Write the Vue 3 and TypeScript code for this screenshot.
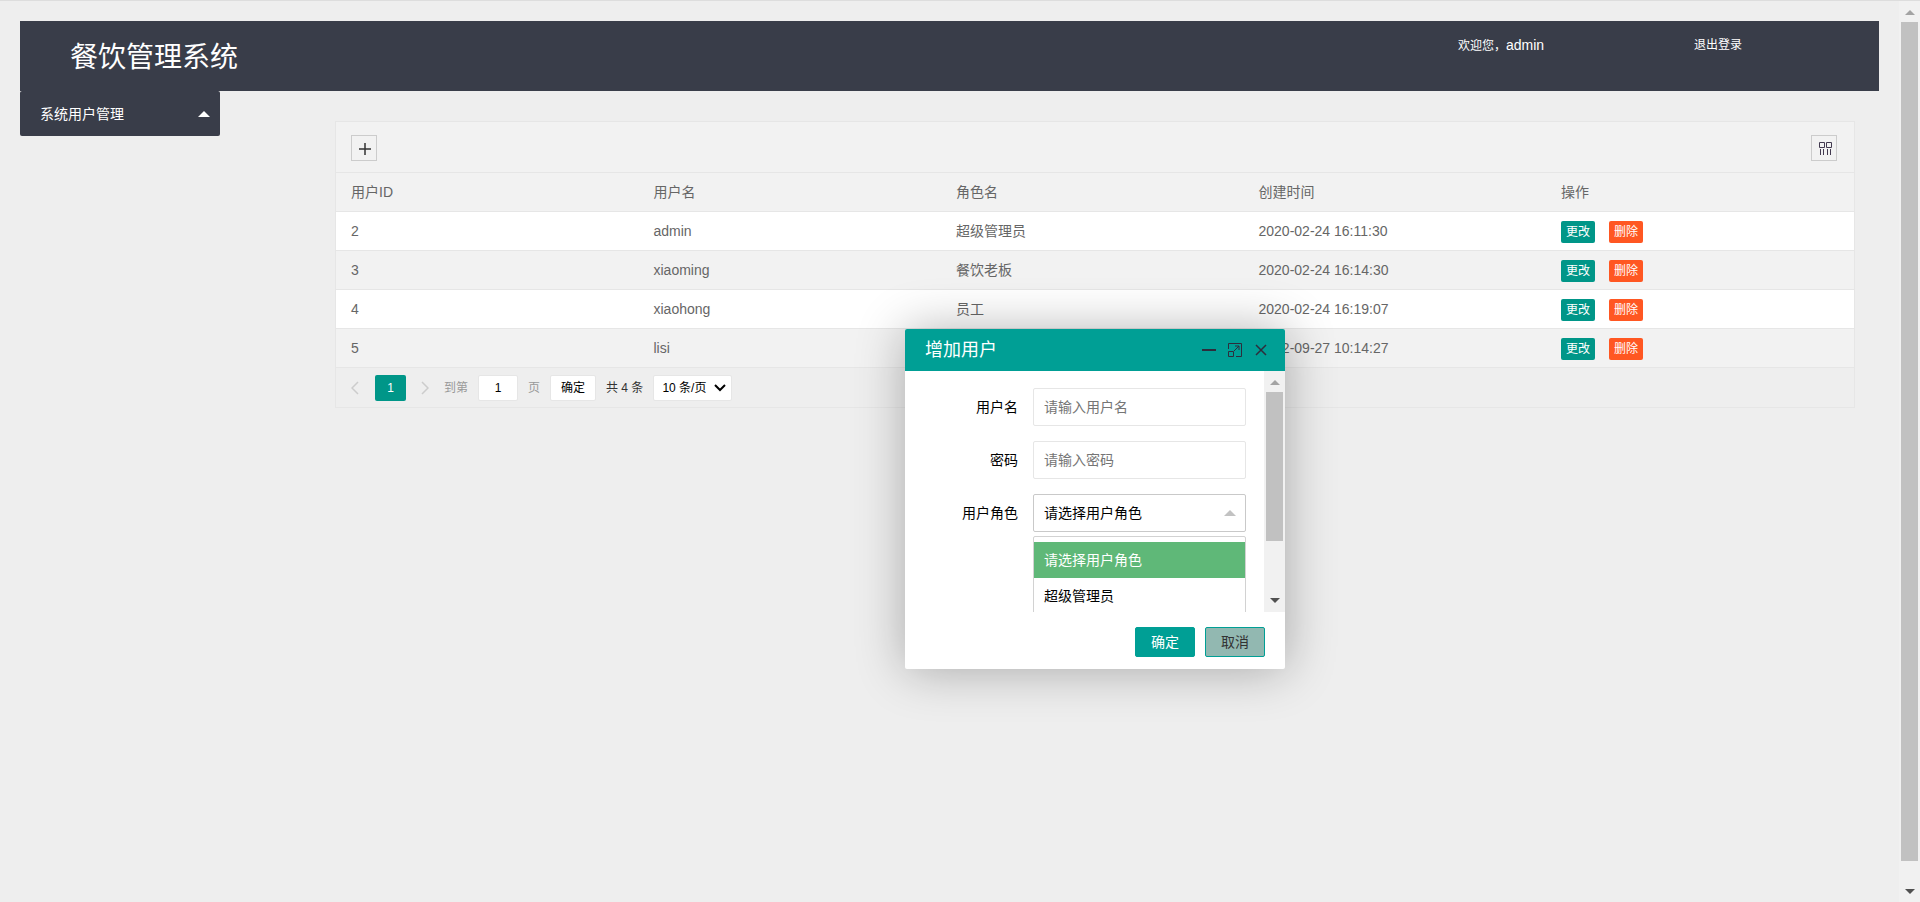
<script setup lang="ts">
import { ref } from 'vue'

interface User {
  id: number
  name: string
  role: string
  created: string
}

const users: User[] = [
  { id: 2, name: 'admin', role: '超级管理员', created: '2020-02-24 16:11:30' },
  { id: 3, name: 'xiaoming', role: '餐饮老板', created: '2020-02-24 16:14:30' },
  { id: 4, name: 'xiaohong', role: '员工', created: '2020-02-24 16:19:07' },
  { id: 5, name: 'lisi', role: '', created: '2022-09-27 10:14:27' },
]

const columns = ['用户ID', '用户名', '角色名', '创建时间', '操作']
const roles = ['请选择用户角色', '超级管理员']

const page = ref('1')
const pageSize = ref('10 条/页')
const username = ref('')
const password = ref('')
const role = ref(roles[0])
const dialogOpen = ref(true)
const rolesOpen = ref(true)

function pickRole(value: string) {
  role.value = value
  rolesOpen.value = false
}
</script>

<template>
  <div class="shell">
    <div class="page">
      <header class="header">
        <h1 class="title">餐饮管理系统</h1>
        <span class="welcome">欢迎您，<span class="who">admin</span></span>
        <a class="logout" href="#">退出登录</a>
      </header>

      <div class="columns">
        <nav class="side">
          <a class="side-item" href="#">
            系统用户管理
            <svg width="12" height="6" viewBox="0 0 12 6"><path d="M0 6 6 0l6 6z" fill="#fff" /></svg>
          </a>
        </nav>

        <main class="content">
          <section class="panel">
            <div class="toolbar">
              <button class="tool" type="button" aria-label="增加" @click="dialogOpen = true">
                <svg width="24" height="24" viewBox="0 0 24 24">
                  <path d="M7 13h12M13 7v12" fill="none" stroke="#333" stroke-width="1.5" />
                </svg>
              </button>
              <button class="tool" type="button" aria-label="筛选列">
                <svg width="24" height="24" viewBox="0 0 24 24" fill="none" stroke="#433a50">
                  <path d="M7.500 6.500h5v5h-5zM14.500 6.500h5v5h-5z" />
                  <path d="M8.500 13v6M11.500 13v6M15.500 13v6M18.500 13v6" />
                </svg>
              </button>
            </div>

            <table class="grid">
              <thead>
                <tr>
                  <th v-for="c in columns" :key="c" scope="col">{{ c }}</th>
                </tr>
              </thead>
              <tbody>
                <tr v-for="u in users" :key="u.id">
                  <td>{{ u.id }}</td>
                  <td>{{ u.name }}</td>
                  <td>{{ u.role }}</td>
                  <td>{{ u.created }}</td>
                  <td>
                    <div class="actions">
                      <button class="mini edit" type="button">更改</button>
                      <button class="mini remove" type="button">删除</button>
                    </div>
                  </td>
                </tr>
              </tbody>
            </table>

            <div class="pager">
              <button class="arrow" type="button" aria-label="上一页">
                <svg width="8" height="14" viewBox="0 0 8 14"><path d="M7 1 1 7l6 6" /></svg>
              </button>
              <button class="current" type="button">1</button>
              <button class="arrow next" type="button" aria-label="下一页">
                <svg width="8" height="14" viewBox="0 0 8 14"><path d="m1 1 6 6-6 6" /></svg>
              </button>
              <label class="muted" for="page-no">到第</label>
              <input id="page-no" v-model="page" class="page-no" type="text" />
              <span class="muted">页</span>
              <button class="go" type="button">确定</button>
              <span class="total">共 4 条</span>
              <div class="size">
                <select v-model="pageSize" aria-label="每页条数">
                  <option>10 条/页</option>
                </select>
                <svg width="12" height="8" viewBox="0 0 12 8"><path d="m1 1 5 5 5-5" /></svg>
              </div>
            </div>
          </section>

          <div v-if="dialogOpen" class="dialog" role="dialog" aria-labelledby="dialog-title">
            <div class="dialog-head">
              <h2 id="dialog-title">增加用户</h2>
              <button type="button" aria-label="最小化">
                <svg width="14" height="14" viewBox="0 0 14 14"><path d="M0 7h14" stroke-width="2" /></svg>
              </button>
              <button type="button" aria-label="最大化">
                <svg width="14" height="14" viewBox="0 0 14 14">
                  <path d="M.5 6V.5h13v13H8M.5 8.500h5v5h-5zM6 8l5-5M7 3h4v4" />
                </svg>
              </button>
              <button type="button" aria-label="关闭" @click="dialogOpen = false">
                <svg width="14" height="14" viewBox="0 0 14 14"><path d="m2 2 10 10M12 2 2 12" stroke-width="1.500" /></svg>
              </button>
            </div>

            <div class="dialog-body">
              <form class="form" @submit.prevent>
                <div class="field">
                  <label for="username">用户名</label>
                  <input id="username" v-model="username" type="text" placeholder="请输入用户名" />
                </div>
                <div class="field">
                  <label for="password">密码</label>
                  <input id="password" v-model="password" type="password" placeholder="请输入密码" />
                </div>
                <div class="field">
                  <label for="role">用户角色</label>
                  <div class="role">
                    <select id="role" v-model="role" @mousedown.prevent="rolesOpen = !rolesOpen">
                      <option v-for="r in roles" :key="r">{{ r }}</option>
                    </select>
                    <svg width="12" height="6" viewBox="0 0 12 6"><path d="M0 6 6 0l6 6z" fill="#c2c2c2" /></svg>
                    <ul v-if="rolesOpen" class="options" role="listbox" aria-label="用户角色">
                      <li
                        v-for="r in roles"
                        :key="r"
                        role="option"
                        :aria-selected="r === role"
                        :class="{ chosen: r === role }"
                        @click="pickRole(r)"
                      >{{ r }}</li>
                    </ul>
                  </div>
                </div>
              </form>
              <div class="bar" aria-hidden="true">
                <svg class="tip" width="10" height="5" viewBox="0 0 10 5"><path d="M0 5 5 0l5 5z" fill="#a3a3a3" /></svg>
                <div class="track"><div class="thumb dialog-thumb"></div></div>
                <svg class="tip" width="10" height="5" viewBox="0 0 10 5"><path d="M0 0h10L5 5z" fill="#505050" /></svg>
              </div>
            </div>

            <div class="dialog-foot">
              <button class="ok" type="button">确定</button>
              <button class="cancel" type="button" @click="dialogOpen = false">取消</button>
            </div>
          </div>
        </main>
      </div>
    </div>

    <div class="bar page-bar" aria-hidden="true">
      <svg class="tip" width="10" height="5" viewBox="0 0 10 5"><path d="M0 5 5 0l5 5z" fill="#a3a3a3" /></svg>
      <div class="track"><div class="thumb page-thumb"></div></div>
      <svg class="tip" width="10" height="5" viewBox="0 0 10 5"><path d="M0 0h10L5 5z" fill="#505050" /></svg>
    </div>
  </div>
</template>

<style>
body {
  margin: 0;
  background: #eee;
}
</style>

<style scoped>
.shell,
.shell * {
  box-sizing: border-box;
}
.shell {
  display: flex;
  height: 100vh;
  overflow: hidden;
  border-top: 1px solid #ddd;
  background: #eee;
  color: #000;
  font: 14px/24px "Liberation Sans", "Noto Sans CJK SC", sans-serif;
}
button,
input,
select {
  margin: 0;
  padding: 0;
  border: 0;
  border-radius: 0;
  font: inherit;
  color: inherit;
  background: none;
  outline: none;
}
button {
  cursor: pointer;
}
a {
  color: inherit;
  text-decoration: none;
}
svg {
  display: block;
}
.page {
  flex: 1;
  min-width: 0;
  padding: 20px;
}

.header {
  display: flex;
  align-items: flex-start;
  height: 70px;
  padding-left: 50px;
  background: #393d49;
  color: #fff;
}
.title {
  flex: 1;
  margin: 0;
  font-size: 28px;
  font-weight: 400;
  line-height: 74px;
}
.welcome,
.logout {
  margin-top: 12px;
  font-size: 12px;
}
.who {
  font-size: 14px;
}
.welcome {
  width: 236px;
}
.logout {
  width: 185px;
}

.columns {
  display: flex;
  align-items: flex-start;
}
.side {
  width: 200px;
  border-radius: 2px;
  background: #393d49;
}
.side-item {
  display: flex;
  align-items: center;
  justify-content: space-between;
  height: 45px;
  padding: 0 10px 0 20px;
  color: #fff;
}
.content {
  position: relative;
  flex: 1;
  min-width: 0;
  margin: 30px 24px 0 115px;
}

.panel {
  border: 1px solid #e6e6e6;
}
.toolbar {
  display: flex;
  justify-content: space-between;
  height: 51px;
  padding: 13px 17px 0 15px;
  border-bottom: 1px solid #e6e6e6;
  background: #f2f2f2;
}
.tool {
  width: 26px;
  height: 26px;
  border: 1px solid #ccc;
}
.grid {
  width: 100%;
  border-collapse: separate;
  border-spacing: 0;
  table-layout: fixed;
  color: #666;
}
.grid th,
.grid td {
  height: 39px;
  padding: 0 15px;
  border-bottom: 1px solid #e6e6e6;
  background: #fff;
  font-weight: 400;
  text-align: left;
}
.grid th:last-child {
  width: 308px;
}
.grid th,
.grid tbody tr:nth-child(even) td {
  background: #f2f2f2;
}
.actions {
  display: flex;
  gap: 14px;
  padding-top: 2px;
}
.mini {
  width: 34px;
  height: 22px;
  border-radius: 2px;
  color: #fff;
  font-size: 12px;
  line-height: 22px;
}
.edit {
  background: #009688;
}
.remove {
  background: #ff5722;
}

.pager {
  display: flex;
  align-items: center;
  height: 39px;
  padding: 1px 15px 0;
  font-size: 12px;
}
.arrow svg {
  fill: none;
  stroke: #ccc;
  stroke-width: 1.5;
}
.current {
  width: 31px;
  height: 26px;
  margin: 0 15px 0 16px;
  border-radius: 2px;
  background: #009688;
  color: #fff;
}
.next {
  margin-right: 15px;
}
.muted {
  color: #999;
}
.page-no {
  width: 40px;
  height: 26px;
  margin: 0 10px;
  border: 1px solid #e6e6e6;
  border-radius: 2px;
  background: #fff;
  text-align: center;
}
.go {
  width: 46px;
  height: 26px;
  margin: 0 10px;
  border: 1px solid #e6e6e6;
  border-radius: 2px;
  background: #fff;
}
.total {
  margin-right: 10px;
  color: #333;
}
.size {
  position: relative;
  width: 79px;
}
.size select {
  display: block;
  width: 100%;
  height: 26px;
  padding: 0 8px;
  border: 1px solid #e6e6e6;
  border-radius: 2px;
  appearance: none;
  background: #fff;
}
.size svg {
  position: absolute;
  top: 9px;
  right: 6px;
  fill: none;
  stroke: #000;
  stroke-width: 2;
  pointer-events: none;
}

.dialog {
  position: absolute;
  top: 208px;
  left: 50%;
  width: 380px;
  margin-left: -190px;
  border-radius: 2px;
  background: #fff;
  box-shadow: 1px 1px 50px rgba(0, 0, 0, 0.3);
}
.dialog-head {
  display: flex;
  align-items: center;
  gap: 12px;
  height: 42px;
  padding: 0 17px 0 20px;
  border-radius: 2px 2px 0 0;
  background: #009f95;
}
.dialog-head h2 {
  flex: 1;
  margin: 0;
  color: #fff;
  font-size: 18px;
  font-weight: 400;
  line-height: 42px;
}
.dialog-head svg {
  fill: none;
  stroke: #2e2d3c;
}
.dialog-body {
  display: flex;
  height: 241px;
  overflow: hidden;
}
.form {
  flex: 1;
  padding: 17px 18px 0 0;
}
.field {
  display: flex;
  height: 38px;
  margin-bottom: 15px;
}
.field label {
  width: 128px;
  padding-right: 15px;
  line-height: 38px;
  text-align: right;
}
.field input,
.role {
  flex: 1;
  min-width: 0;
}
.field input,
.role select {
  height: 38px;
  padding: 0 10px;
  border: 1px solid #e6e6e6;
  border-radius: 2px;
  background: #fff;
}
.field input::placeholder {
  color: #757575;
}
.role {
  position: relative;
}
.role select {
  display: block;
  width: 100%;
  border-color: #c9c9c9;
  appearance: none;
}
.role svg {
  position: absolute;
  top: 16px;
  right: 10px;
  pointer-events: none;
}
.options {
  position: absolute;
  top: 42px;
  left: 0;
  right: 0;
  margin: 0;
  padding: 5px 0;
  border: 1px solid #d2d2d2;
  border-radius: 2px;
  background: #fff;
  list-style: none;
}
.options li {
  padding: 0 10px;
  line-height: 36px;
  cursor: pointer;
}
.options .chosen {
  background: #5fb878;
  color: #fff;
}
.dialog-foot {
  display: flex;
  justify-content: flex-end;
  gap: 10px;
  padding: 15px 20px 12px;
}
.dialog-foot button {
  width: 60px;
  height: 30px;
  border: 1px solid #009f95;
  border-radius: 2px;
}
.ok {
  background: #009f95;
  color: #fff;
}
.cancel {
  background: #92b8b1;
  color: #333;
}

.bar {
  display: flex;
  flex-direction: column;
  align-items: center;
  width: 21px;
  padding: 9px 2px;
  background: #f1f1f1;
}
.tip {
  flex: none;
}
.track {
  flex: 1;
  width: 17px;
  margin: 7px 0;
}
.thumb {
  background: #c1c1c1;
}
.dialog-thumb {
  height: 75%;
}
.page-bar {
  padding-bottom: 8px;
}
.page-thumb {
  height: 97.6%;
}
</style>
